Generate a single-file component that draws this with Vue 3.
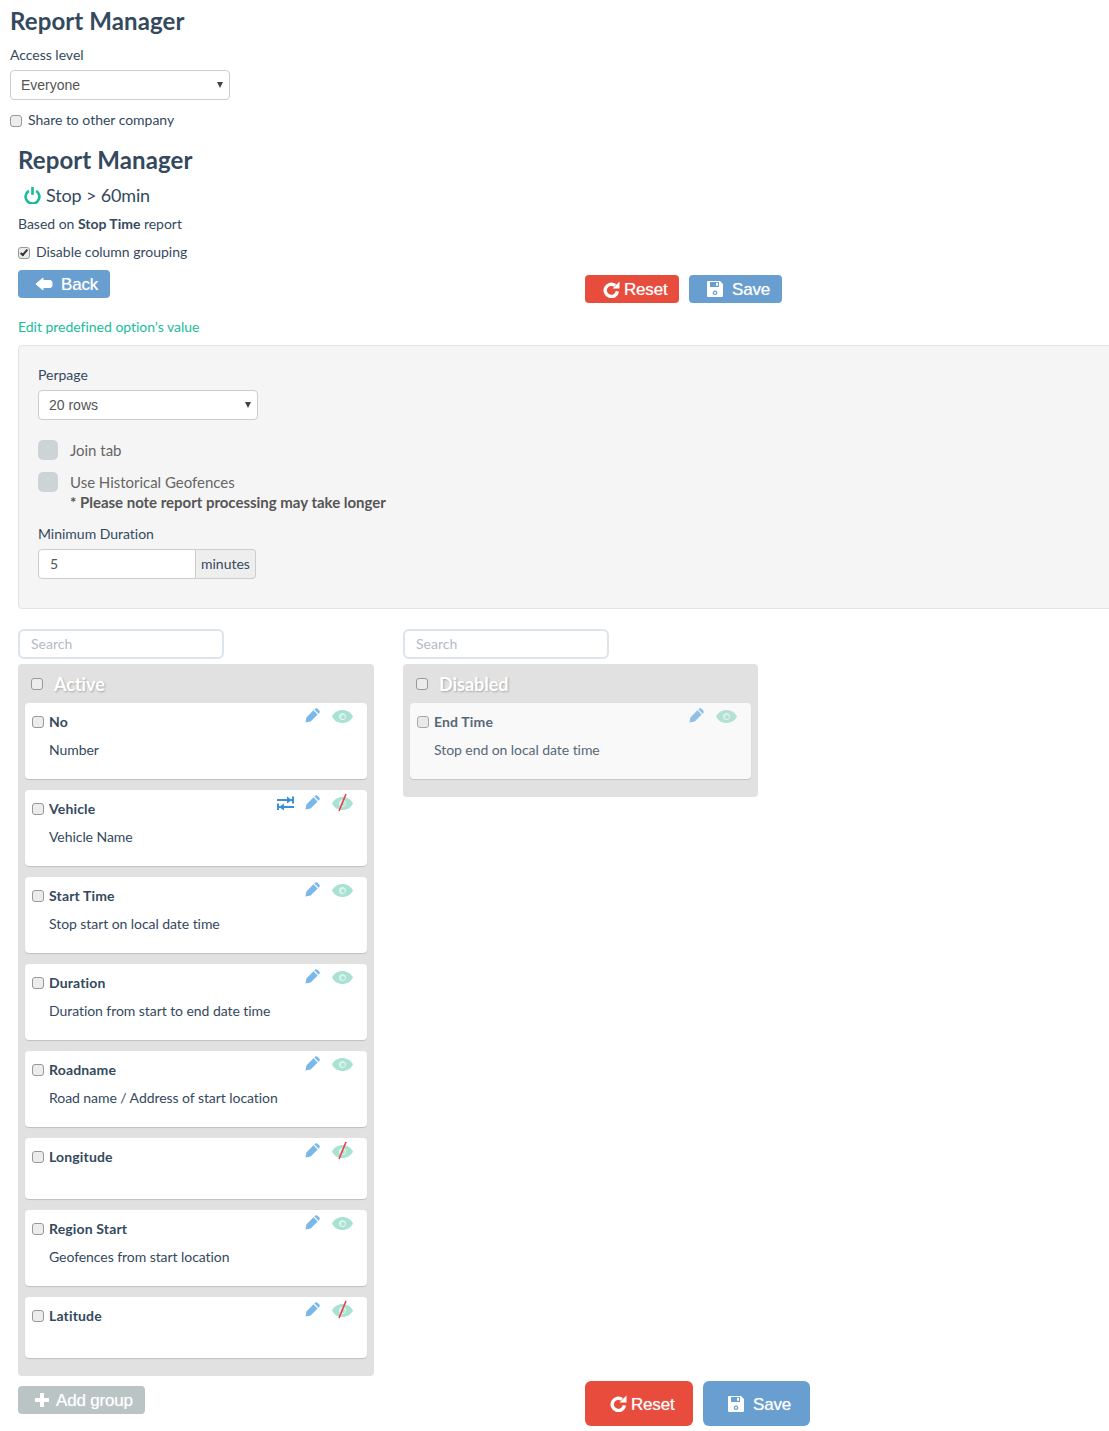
<script setup>
const active = [
  { title: 'No', desc: 'Number' },
  { title: 'Vehicle', desc: 'Vehicle Name', swap: true, hidden: true },
  { title: 'Start Time', desc: 'Stop start on local date time' },
  { title: 'Duration', desc: 'Duration from start to end date time' },
  { title: 'Roadname', desc: 'Road name / Address of start location' },
  { title: 'Longitude', desc: '', hidden: true },
  { title: 'Region Start', desc: 'Geofences from start location' },
  { title: 'Latitude', desc: '', hidden: true }
]
const columns = [
  { name: 'Active', cards: active, off: false },
  { name: 'Disabled', cards: [{ title: 'End Time', desc: 'Stop end on local date time' }], off: true }
]
</script>

<template>
  <div class="page">
    <h1 class="title first">Report Manager</h1>
    <label class="label access">Access level</label>
    <div class="select-wrap"><select class="select"><option>Everyone</option></select></div>
    <label class="check share"><input type="checkbox" class="box" />Share to other company</label>

    <section class="inner">
      <h1 class="title second">Report Manager</h1>
      <div class="report-name">
        <svg class="power" viewBox="0 0 16 16" width="17" height="17">
          <path d="M4.600 3.600a6.500 6.500 0 1 0 6.800 0" fill="none" stroke="#1abc9c" stroke-width="2.500" />
          <path d="M8 0v7.400" stroke="#1abc9c" stroke-width="2.500" />
        </svg>
        <span>Stop &gt; 60min</span>
      </div>
      <p class="based">Based on <b>Stop Time</b> report</p>
      <label class="check disable"><input type="checkbox" class="box" checked />Disable column grouping</label>

      <div class="toolbar">
        <button class="btn blue back">
          <svg viewBox="0 0 18 14" width="18" height="14">
            <path d="M1 7 8 1v2.500h7a2 2 0 0 1 2 2v3a2 2 0 0 1-2 2H8V13z" fill="#fff" stroke="#fff" stroke-linejoin="round" />
          </svg>
          <span>Back</span>
        </button>
        <div class="actions small">
          <button class="btn red reset">
            <svg viewBox="0 0 16 16" width="17" height="17">
              <path d="M13.600 9.800A5.800 5.800 0 1 1 11.400 4.200" fill="none" stroke="#fff" stroke-width="3.200" />
              <path d="M9 7h6.500V.5z" fill="#fff" />
            </svg>
            <span>Reset</span>
          </button>
          <button class="btn blue save">
            <svg viewBox="0 0 18 18" width="18" height="18">
              <path fill-rule="evenodd" d="M2 1h12l3 3v12a1 1 0 0 1-1 1H2a1 1 0 0 1-1-1V2a1 1 0 0 1 1-1zm2 1v5h9V2zm6 .8v3h2v-3zM9 10.500a2.300 2.300 0 1 0 .01 0zm0 1.300a1 1 0 1 1-.01 0z" fill="#fff" />
            </svg>
            <span>Save</span>
          </button>
        </div>
      </div>

      <p class="edit-link">Edit predefined option's value</p>

      <div class="panel">
        <label class="label">Perpage</label>
        <div class="select-wrap"><select class="select"><option>20 rows</option></select></div>
        <div class="toggle-row join"><span class="toggle"></span><span>Join tab</span></div>
        <div class="toggle-row hist">
          <span class="toggle"></span>
          <div>
            <div>Use Historical Geofences</div>
            <b class="note">* Please note report processing may take longer</b>
          </div>
        </div>
        <label class="label min">Minimum Duration</label>
        <div class="input-group">
          <input class="num" value="5" />
          <span class="addon">minutes</span>
        </div>
      </div>

      <div class="boards">
        <div v-for="col in columns" :key="col.name" class="board">
          <input class="search" placeholder="Search" />
          <div class="column">
            <div class="col-head"><input type="checkbox" class="box" /><span>{{ col.name }}</span></div>
            <div v-for="c in col.cards" :key="c.title" class="card" :class="{ off: col.off }">
              <div class="card-icons">
                <svg v-if="c.swap" class="swap" viewBox="0 0 17 14" width="17" height="14">
                  <path d="M0 4h15M16 .5v7M2 11h15M1 7.500v6.500" stroke="#3f8ed8" stroke-width="2" fill="none" />
                  <path d="M10 .5l5 3.500-5 3.500zM7 7.500 2 11l5 3.500z" fill="#3f8ed8" />
                </svg>
                <svg class="pencil" viewBox="0 0 16 16" width="15" height="15">
                  <path fill-rule="evenodd" d="M.5 15.500 1.500 10 9 2.500 13.500 7 6 14.500zM10 1.500 11 .5q1-.5 2 0l2.500 2.500q.5 1 0 2l-1 1z" fill="#7ab8ea" />
                </svg>
                <svg class="eye" viewBox="0 0 21 13" width="21" height="13">
                  <path fill-rule="evenodd" d="M0 6.500C4-2.200 17-2.200 21 6.500 17 15.200 4 15.200 0 6.500zm10.500-3.300a3.300 3.300 0 1 0 .01 0z" fill="#a9e2d2" />
                  <circle cx="10.500" cy="6.500" r="3.300" fill="#d8f3ec" />
                  <circle cx="11" cy="7" r="1.900" fill="#a9e2d2" />
                  <path v-if="c.hidden" d="M14-3 7 14" stroke="#f5333f" stroke-width="1.500" />
                </svg>
              </div>
              <label class="card-title"><input type="checkbox" class="box" />{{ c.title }}</label>
              <p class="card-desc">{{ c.desc }}</p>
            </div>
          </div>
        </div>
      </div>

      <div class="footer">
        <button class="btn grey add">
          <svg viewBox="0 0 14 14" width="14" height="14"><path d="M5 0h4v5h5v4H9v5H5V9H0V5h5z" fill="#fff" /></svg>
          <span>Add group</span>
        </button>
        <div class="actions big">
          <button class="btn red reset">
            <svg viewBox="0 0 16 16" width="17" height="17">
              <path d="M13.600 9.800A5.800 5.800 0 1 1 11.400 4.200" fill="none" stroke="#fff" stroke-width="3.200" />
              <path d="M9 7h6.500V.5z" fill="#fff" />
            </svg>
            <span>Reset</span>
          </button>
          <button class="btn blue save">
            <svg viewBox="0 0 18 18" width="18" height="18">
              <path fill-rule="evenodd" d="M2 1h12l3 3v12a1 1 0 0 1-1 1H2a1 1 0 0 1-1-1V2a1 1 0 0 1 1-1zm2 1v5h9V2zm6 .8v3h2v-3zM9 10.500a2.300 2.300 0 1 0 .01 0zm0 1.300a1 1 0 1 1-.01 0z" fill="#fff" />
            </svg>
            <span>Save</span>
          </button>
        </div>
      </div>
    </section>
  </div>
</template>

<style>
html, body { margin: 0; background: #fff; overflow: hidden; }
</style>

<style scoped>
.page {
  width: 1109px;
  height: 1431px;
  overflow: hidden;
  box-sizing: border-box;
  padding: 8px 0 0 10px;
  font-family: Lato, "Open Sans", sans-serif;
  font-size: 14px;
  line-height: 20px;
  letter-spacing: -0.02px;
  color: #34495e;
}
.title { margin: 0; font-size: 24px; line-height: 26px; font-weight: 700; letter-spacing: 0.1px; color: #34495e; }
.label { display: block; }
.access { margin-top: 11px; }
.select-wrap { position: relative; width: 220px; margin-top: 5px; }
.select-wrap::after {
  content: "";
  position: absolute;
  right: 7px;
  top: 12px;
  border-style: solid;
  border-width: 6px 3px 0;
  border-color: #444 transparent transparent;
  pointer-events: none;
}
.select {
  appearance: none;
  display: block;
  width: 220px;
  height: 30px;
  padding: 0 10px;
  background: #fff;
  border: 1px solid #ccc;
  border-radius: 4px;
  font-family: "Liberation Sans", sans-serif;
  font-size: 14px;
  color: #555;
}
.check { display: flex; align-items: center; height: 20px; }
.box {
  appearance: none;
  position: relative;
  flex: none;
  width: 12px;
  height: 12px;
  margin: 2px 6px 0 0;
  box-sizing: border-box;
  background: #ececec;
  border: 1px solid #999;
  border-radius: 3px;
}
.box:checked::after {
  content: "";
  position: absolute;
  left: 3px;
  top: 0;
  width: 4px;
  height: 8px;
  border: solid #333;
  border-width: 0 2px 2px 0;
  box-sizing: border-box;
  transform: rotate(40deg);
}
.share { margin-top: 10px; }
.inner { margin-left: 8px; }
.second { margin-top: 17px; }
.report-name { display: flex; align-items: center; gap: 5px; margin: 9px 0 0 6px; height: 26px; font-size: 18px; letter-spacing: -0.15px; }
.based { margin: 6px 0 0; line-height: 20px; }
.disable { margin-top: 8px; }
.toolbar { display: flex; align-items: flex-start; margin-top: 8px; }
.btn {
  display: inline-flex;
  align-items: center;
  border: 0;
  font-family: "Liberation Sans", sans-serif;
  font-size: 17px;
  color: #fff;
  box-sizing: border-box;
  letter-spacing: -0.2px;
}
.btn span { position: relative; top: 1px; text-shadow: 0 0 1px rgba(255, 255, 255, .6); }
.blue { background: #699fd0; }
.red { background: #e74c3c; }
.grey { background: #bac4c5; }
.back { height: 28px; width: 92px; padding: 0 0 0 17px; gap: 8px; border-radius: 4px; }
.actions { display: flex; }
.small { margin: 5px 0 0 475px; gap: 10px; }
.small .btn { height: 28px; border-radius: 4px; }
.small .reset { width: 94px; padding-left: 18px; gap: 4px; }
.small .save { width: 93px; padding-left: 17px; gap: 8px; }
.edit-link { margin: 14px 0 0; color: #1abc9c; }
.panel {
  width: 1200px;
  height: 264px;
  box-sizing: border-box;
  margin-top: 8px;
  padding: 19px;
  background: #f5f5f5;
  border: 1px solid #e3e3e3;
  border-radius: 4px;
}
.toggle-row { display: flex; gap: 12px; font-size: 15px; color: #666; }
.toggle { flex: none; width: 20px; height: 20px; background: #ced3d6; border-radius: 5px; }
.join { margin-top: 20px; }
.hist { margin-top: 12px; }
.note { color: #555; }
.min { margin-top: 12px; }
.input-group { display: flex; width: 218px; height: 30px; margin-top: 5px; }
.num {
  width: 158px;
  box-sizing: border-box;
  padding: 0 11px 2px;
  background: #fff;
  border: 1px solid #ccc;
  border-radius: 4px 0 0 4px;
  font-family: Lato, sans-serif;
  font-size: 14px;
  color: #555;
}
.addon {
  flex: 1;
  box-sizing: border-box;
  padding: 4px 5px;
  background: #eee;
  border: 1px solid #ccc;
  border-left: 0;
  border-radius: 0 4px 4px 0;
}
.boards { display: flex; gap: 29px; align-items: flex-start; margin-top: 20px; }
.board { width: 356px; }
.board + .board { width: 355px; }
.search {
  display: block;
  width: 206px;
  height: 30px;
  box-sizing: border-box;
  padding: 0 11px 2px;
  border: 2px solid #dce4ec;
  border-radius: 6px;
  font-family: Lato, sans-serif;
  font-size: 14px;
}
.search::placeholder { color: #b2bcc5; }
.column { margin-top: 5px; padding: 0 7px 7px; background: #e1e1e1; border-radius: 4px; }
.col-head { display: flex; align-items: center; height: 39px; font-size: 18px; font-weight: 700; color: #fff; text-shadow: 1px 1px 2px rgba(0, 0, 0, .25); }
.col-head .box { margin: 1px 11px 0 6px; }
.card {
  position: relative;
  margin-bottom: 11px;
  padding: 9px 7px 19px;
  background: #fff;
  border-radius: 4px;
  box-shadow: 0 1px 1px rgba(0, 0, 0, .15);
}
.off { opacity: .8; }
.card-icons { position: absolute; top: 5px; right: 14px; display: flex; align-items: flex-start; }
.card-icons svg { display: block; overflow: visible; }
.swap { margin: 1px 11px 0 0; }
.pencil { margin-right: 12px; }
.eye { margin-top: 2px; }
.card-title { display: flex; align-items: center; height: 20px; font-weight: 700; letter-spacing: 0.15px; color: #34495e; }
.card-title .box { margin: 0 5px 0 0; }
.card-desc { margin: 8px 0 0 17px; min-height: 5px; letter-spacing: -0.06px; }
.footer { display: flex; align-items: flex-start; }
.add { height: 28px; width: 127px; margin-top: 10px; padding-left: 17px; gap: 7px; border-radius: 4px; }
.big { margin: 5px 0 0 440px; gap: 10px; }
.big .btn { height: 45px; border-radius: 6px; }
.big .reset { width: 108px; padding-left: 25px; gap: 4px; }
.big .save { width: 107px; padding-left: 24px; gap: 8px; }
</style>
